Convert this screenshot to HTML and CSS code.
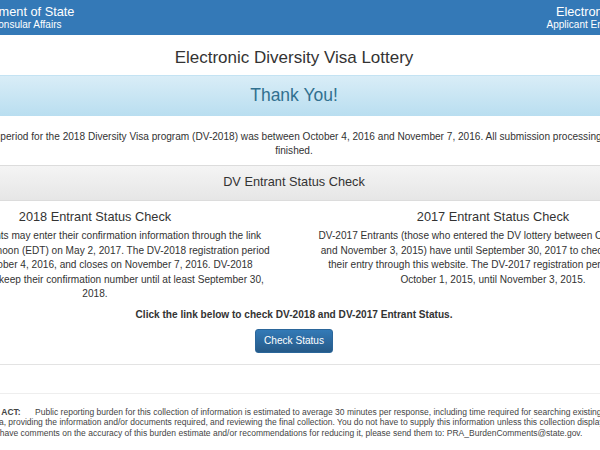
FILE: index.html
```html
<!DOCTYPE html>
<html lang="en">
<head>
    <meta charset="utf-8" />
    <title>Electronic Diversity Visa Lottery</title>
    <link rel="stylesheet" href="styles.css">
</head>
<body>
<div class="page">
    <div class="topbar">
        <div class="container topbar-inner">
            <div class="brand brand-dos">
                <div class="brand-main">U.S. Department of State</div>
                <div class="brand-sub">Bureau of Consular Affairs</div>
            </div>
            <div class="brand brand-app">
                <div class="brand-main">Electronic DV Lottery</div>
                <div class="brand-sub">Applicant Entrant Status Check</div>
            </div>
        </div>
    </div>

    <h1 class="title">Electronic Diversity Visa Lottery</h1>

    <div class="alert-band">Thank You!</div>

    <p class="intro">The entry period for the 2018 Diversity Visa program (DV-2018) was between October 4, 2016 and November 7, 2016. All submission processing is now finished.</p>

    <div class="section-band">DV Entrant Status Check</div>

    <div class="container">
        <div class="cols">
            <div class="col">
                <h2>2018 Entrant Status Check</h2>
                <p>DV-2018 Entrants may enter their confirmation information through the link below starting at noon (EDT) on May 2, 2017. The DV-2018 registration period opens on October 4, 2016, and closes on November 7, 2016. DV-2018 Entrants should keep their confirmation number until at least September 30, 2018.</p>
            </div>
            <div class="col">
                <h2>2017 Entrant Status Check</h2>
                <p>DV-2017 Entrants (those who entered the DV lottery between October 1, 2015 and November 3, 2015) have until September 30, 2017 to check the status of their entry through this website. The DV-2017 registration period was from October 1, 2015, until November 3, 2015.</p>
            </div>
        </div>

        <p class="cta">Click the link below to check DV-2018 and DV-2017 Entrant Status.</p>
        <div class="cta-row">
            <a class="btn" href="#">Check Status</a>
        </div>
        <hr class="rule" />
    </div>

    <div class="footer">
        <p><b class="pra">PAPERWORK REDUCTION ACT:</b> Public reporting burden for this collection of information is estimated to average 30 minutes per response, including time required for searching existing data sources, gathering the necessary data, providing the information and/or documents required, and reviewing the final collection. You do not have to supply this information unless this collection displays a currently valid OMB control number. If you have comments on the accuracy of this burden estimate and/or recommendations for reducing it, please send them to: PRA_BurdenComments@state.gov.</p>
    </div>
</div>
</body>
</html>
```

FILE: styles.css
```css
html, body {
    overflow: hidden;
}

body {
    margin: 0;
    font-family: "Liberation Sans", Arial, Helvetica, sans-serif;
    color: #333;
    background: #fff;
}

.page {
    width: 820px;
    margin-left: -116px;
}

.container {
    padding: 0 12px;
}

/* header bar */
.topbar {
    background-color: #3479b7;
    color: #fff;
    height: 35px;
}

.topbar-inner {
    display: flex;
    justify-content: space-between;
    padding-top: 4px;
}

.brand {
    text-align: center;
}

.brand-dos {
    margin-left: 36px;
}

.brand-app {
    margin-right: 7px;
}

.brand-main {
    font-size: 12.75px;
    line-height: 15px;
}

.brand-sub {
    font-size: 10px;
    line-height: 12px;
}

.title {
    margin: 0;
    padding: 13px 0 7px;
    font-size: 17px;
    font-weight: normal;
    line-height: 20px;
    text-align: center;
    color: #333;
}

.alert-band {
    border-top: 1px solid #c4e3f3;
    background: linear-gradient(#d9edf7, #b9def0);
    color: #31708f;
    font-size: 17.5px;
    line-height: 22px;
    padding: 8px 0 10px;
    text-align: center;
}

.intro {
    max-width: 700px;
    margin: 13.5px auto 6.5px;
    font-size: 10.1px;
    line-height: 14.4px;
    text-align: center;
}

.section-band {
    border-top: 1px solid #dcdcdc;
    border-bottom: 1px solid #dcdcdc;
    background: linear-gradient(#f4f4f4, #e6e6e6);
    font-size: 12.75px;
    line-height: 18px;
    padding: 7px 0 9px;
    text-align: center;
}

.cols {
    display: grid;
    grid-template-columns: 1fr 1fr;
}

.col {
    padding: 0 21.5px;
    text-align: center;
}

.col h2 {
    margin: 6.8px 0 3.7px;
    font-size: 12.75px;
    font-weight: normal;
    line-height: 18px;
}

.col p {
    margin: 0;
    font-size: 10.1px;
    line-height: 14.4px;
}

.cta {
    margin: 6.5px 0 0;
    font-size: 10.1px;
    font-weight: bold;
    line-height: 14.4px;
    text-align: center;
}

.cta-row {
    display: flex;
    justify-content: center;
    margin-top: 7px;
}

.btn {
    padding: 4px 7.5px;
    border: 1px solid #2b669a;
    border-radius: 3px;
    background: linear-gradient(#337ab7, #265a88);
    color: #fff;
    font-size: 10.1px;
    line-height: 14px;
    text-decoration: none;
}

.rule {
    height: 0;
    margin: 10.5px 0 0;
    border: 0;
    border-top: 1px solid #e3e3e3;
}

.footer {
    margin-top: 28px;
    border-top: 1px solid #eee;
    padding: 13px 23px 0 10px;
    font-size: 8.5px;
    line-height: 10.5px;
    color: #444;
}

.footer p {
    margin: 0;
    text-indent: -3px;
}

.pra {
    margin-right: 12px;
}
```
